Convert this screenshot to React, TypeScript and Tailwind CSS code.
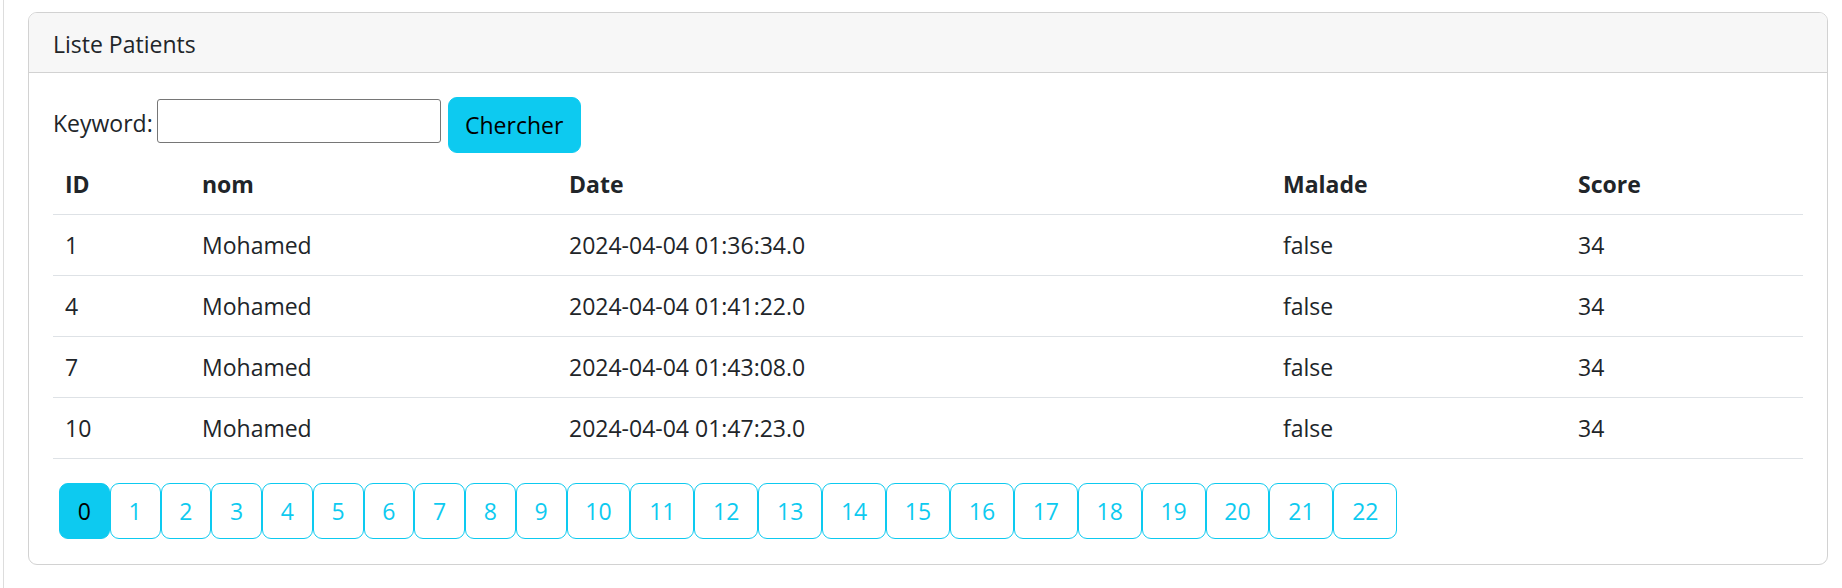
import React from "react";

type Patient = { id: number; nom: string; date: string; malade: boolean; score: number };

const patients: Patient[] = [
  { id: 1, nom: "Mohamed", date: "2024-04-04 01:36:34.0", malade: false, score: 34 },
  { id: 4, nom: "Mohamed", date: "2024-04-04 01:41:22.0", malade: false, score: 34 },
  { id: 7, nom: "Mohamed", date: "2024-04-04 01:43:08.0", malade: false, score: 34 },
  { id: 10, nom: "Mohamed", date: "2024-04-04 01:47:23.0", malade: false, score: 34 },
];

const pages = Array.from({ length: 23 }, (_, i) => i);
const currentPage = 0;

export default function App() {
  return (
    <div className="min-h-screen bg-white pl-[3px] text-[23px] leading-[36px] text-[#212529] [font-family:'Open_Sans',sans-serif]">
      <div className="min-h-[588px] border-l border-[#dddddd] pl-[24px] pr-[14px] pt-[12px]">
        <div className="rounded-[9px] border border-[#d2d2d2] bg-white">
          <div className="flex h-[60px] items-center rounded-t-[8px] border-b border-[#d2d2d2] bg-[#f7f7f7] px-[24px] pt-[2px]">
            Liste Patients
          </div>
          <div className="px-[24px] pt-[24px] pb-[25px]">
            <form className="flex items-start" onSubmit={(e) => e.preventDefault()}>
              <label className="mt-[8px]">Keyword:</label>
              <input
                type="text"
                className="ml-[4px] mt-[2px] h-[44px] w-[284px] rounded-[3px] border border-[#767676] bg-white px-[3px] outline-none"
              />
              <button
                type="submit"
                className="ml-[7px] h-[56px] w-[133px] rounded-[9px] border border-[#0dcaf0] bg-[#0dcaf0] text-black"
              >
                Chercher
              </button>
            </form>
            <table className="mt-[1px] mb-[24px] w-full table-fixed border-collapse text-left">
              <thead>
                <tr className="border-b border-[#dee2e6]">
                  <th className="w-[137px] px-[12px] py-[12px] font-bold">ID</th>
                  <th className="w-[367px] px-[12px] py-[12px] font-bold">nom</th>
                  <th className="w-[714px] px-[12px] py-[12px] font-bold">Date</th>
                  <th className="w-[295px] px-[12px] py-[12px] font-bold">Malade</th>
                  <th className="px-[12px] py-[12px] font-bold">Score</th>
                </tr>
              </thead>
              <tbody>
                {patients.map((p) => (
                  <tr key={p.id} className="border-b border-[#dee2e6]">
                    <td className="px-[12px] py-[12px]">{p.id}</td>
                    <td className="px-[12px] py-[12px]">{p.nom}</td>
                    <td className="px-[12px] py-[12px]">{p.date}</td>
                    <td className="px-[12px] py-[12px]">{String(p.malade)}</td>
                    <td className="px-[12px] py-[12px]">{p.score}</td>
                  </tr>
                ))}
              </tbody>
            </table>
            <ul className="ml-[6px] flex">
              {pages.map((n) => (
                <li key={n}>
                  <button
                    className={
                      n === currentPage
                        ? "h-[56px] rounded-[9px] border border-[#0dcaf0] bg-[#0dcaf0] px-[17.8px] text-black"
                        : "h-[56px] rounded-[9px] border border-[#0dcaf0] bg-white px-[17.8px] text-[#0dcaf0]"
                    }
                  >
                    {n}
                  </button>
                </li>
              ))}
            </ul>
          </div>
        </div>
      </div>
    </div>
  );
}
